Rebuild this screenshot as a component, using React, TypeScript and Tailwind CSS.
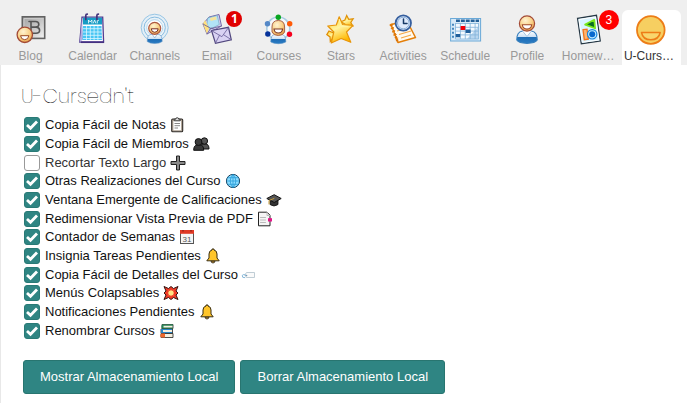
import { useState } from "react";
import type { ReactNode } from "react";

const line = { fill: "none", strokeLinecap: "round", strokeLinejoin: "round" } as const;

function Gradients() {
  return (
    <svg className="absolute size-0" aria-hidden="true">
      <defs>
        <radialGradient id="face" cx="0.4" cy="0.3" r="0.75">
          <stop offset="0" stopColor="#fff3d0" />
          <stop offset="0.6" stopColor="#f8cf84" />
          <stop offset="1" stopColor="#e59a45" />
        </radialGradient>
        <linearGradient id="gold" x1="0" y1="0" x2="0.4" y2="1">
          <stop offset="0" stopColor="#ffd21c" />
          <stop offset="0.5" stopColor="#fff3a0" />
          <stop offset="1" stopColor="#ffb800" />
        </linearGradient>
        <linearGradient id="grayBox" x1="0" y1="0" x2="1" y2="1">
          <stop offset="0" stopColor="#a2a2a2" />
          <stop offset="0.5" stopColor="#c4c4c4" />
          <stop offset="1" stopColor="#f4f4f4" />
        </linearGradient>
        <linearGradient id="shirt" x1="0" y1="0" x2="0" y2="1">
          <stop offset="0" stopColor="#ffffff" />
          <stop offset="0.45" stopColor="#cfe2f5" />
          <stop offset="0.5" stopColor="#1f6db5" />
          <stop offset="1" stopColor="#2a7cc4" />
        </linearGradient>
      </defs>
    </svg>
  );
}

function NavSvg({ children }: { children: ReactNode }) {
  return (
    <svg viewBox="0 0 30 30" className="size-[30px] overflow-visible" aria-hidden="true">
      {children}
    </svg>
  );
}

function BlogIcon() {
  return (
    <NavSvg>
      <rect x="6.3" y="2.8" width="22.4" height="21.6" fill="url(#grayBox)" stroke="#626262" strokeWidth="1.6" />
      <path d="M8 23V4.500H27" {...line} stroke="#c9c9c9" strokeWidth="1" />
      <path d="M13 7.500h6.500q3.300 0 3.300 2.700 0 2.600-2.600 2.900 3.400.3 3.400 3.200 0 3-3.600 3H14M15 7.500v11.800M15.500 13.100h4.500" {...line} stroke="#555" strokeWidth="1.600" />
      <circle cx="8.800" cy="20.800" r="7.700" fill="url(#face)" stroke="#a34a36" strokeWidth="1.300" />
      <path d="M4.500 21.700h8.400q-.6 4-4.200 4t-4.200-4z" fill="#fff" stroke="#9b4a22" strokeWidth="1" />
    </NavSvg>
  );
}

function CalendarIcon() {
  return (
    <NavSvg>
      <path d="M4 3.200H24.700L25.600 28H1.800z" fill="#fff" stroke="#4f3b91" strokeWidth="1.300" />
      <path d="M4 3.200 5.200 25.500 1.800 28z" fill="#b5aee0" />
      <path d="M5 3.700H24V10.500H5z" fill="#169cc4" />
      <path d="M5 12H23.500L24 26H4.500z" fill="#48c5f3" />
      <path d="M5 14.700h19M5 18h19M5 21.300h19M5 24.500h19M8.500 12v14M12.300 12v14M16.100 12v14M19.900 12v14" stroke="#dcf7ff" strokeWidth=".8" />
      <path d="M10.500 9V6l1.700 2 1.700-2v3M15.400 9l1.200-3 1.200 3M19.300 9V6.400h1.200" {...line} stroke="#fff" strokeWidth=".8" />
      <path d="M7.800 5.500V1.500q0-1.400 1.500-1.400M18.900 5.500V1.500q0-1.400 1.500-1.400" {...line} stroke="#42327c" strokeWidth="1.700" />
      <path d="M3 28.300h23" stroke="#443080" strokeWidth="1.500" />
    </NavSvg>
  );
}

function ChannelsIcon() {
  return (
    <NavSvg>
      <circle cx="14.700" cy="13.700" r="13.500" fill="#e4eff7" stroke="#98c6e5" strokeWidth="1" />
      <circle cx="14.700" cy="13.700" r="10.600" fill="#eaf3f8" stroke="#89bce0" strokeWidth="1" />
      <circle cx="14.700" cy="13.700" r="8" fill="#fff" stroke="#a5cde8" strokeWidth=".8" />
      <path d="M7.200 27.500q0-7 4-7h7q4 0 4 7-2.500 2-7.500 2t-7.500-2z" fill="url(#shirt)" stroke="#5f95c6" strokeWidth=".6" />
      <path d="m12 20 2.700 4 2.700-4" fill="#fff" stroke="#75a5ce" strokeWidth=".6" />
      <circle cx="14.700" cy="14.300" r="6" fill="url(#face)" stroke="#ad5842" strokeWidth="1.200" />
      <path d="M11.200 14.800h7q-.3 3.500-3.500 3.500t-3.500-3.500z" fill="#fff" stroke="#7d2e22" strokeWidth="1" />
    </NavSvg>
  );
}

function EmailIcon() {
  return (
    <NavSvg>
      <path d="m1 10 6-7 10-2.500 2.500 11.500-14.500 8z" fill="#d5cff0" stroke="#756aa9" strokeWidth="1" />
      <path d="m5 10 .8-6 9.500-2.500 2 9-9.800 5z" fill="#b2e3f7" stroke="#6aa6be" strokeWidth=".6" />
      <path d="m1 10 2-4 4 8-2 6z" fill="#ffe17d" />
      <path d="m8 4 6-1.500.7 3-6 1.500z" fill="#f7e49a" />
      <path d="m1 10 8 4.500 10.500-2.500M5 20l4-6 5 2" {...line} stroke="#6d639b" strokeWidth=".9" />
      <path d="m9.500 16.500 17-3.200 2.800 12.500-15.800 3.500z" fill="#d9d2f3" stroke="#51477e" strokeWidth="1.200" />
      <path d="m9.700 16.700 10.200 6 6.500-9M13.500 29l4-7.800M29 25.500l-7-4.500" {...line} stroke="#72679f" strokeWidth=".9" />
    </NavSvg>
  );
}

function CoursesIcon() {
  return (
    <NavSvg>
      <circle cx="14.300" cy="14.500" r="11.500" fill="#f6f9fb" stroke="#aacce2" strokeWidth="1.600" />
      <path d="M6.800 28q0-7.500 4.200-7.500h6.600q4.200 0 4.200 7.500-3 1.700-7.500 1.700t-7.500-1.700z" fill="url(#shirt)" stroke="#4f8dc4" strokeWidth=".6" />
      <path d="M8 13q0-6.500 6.300-6.500t6.300 6.500v5q-1.500 3.500-6.300 3.500t-6.300-3.500z" fill="url(#face)" stroke="#a86449" strokeWidth="1" />
      <path d="M10 15h8.600q-.5 4-4.300 4t-4.300-4z" fill="#fff" stroke="#7d3827" strokeWidth="1.100" />
      <circle cx="14.300" cy="3.300" r="2.700" fill="#08a51f" />
      <circle cx="3.500" cy="9.700" r="2.700" fill="#5588c7" />
      <circle cx="25.700" cy="9.700" r="2.700" fill="#ff5a08" />
      <circle cx="3.800" cy="20" r="2.700" fill="#06329a" />
      <circle cx="25.500" cy="20.300" r="2.700" fill="#f5001d" />
    </NavSvg>
  );
}

function StarsIcon() {
  return (
    <NavSvg>
      <path d="m20.700 1.500 2 3.800 4.500-.5-2.400 3.700 2 3.500-4.400-.5-3.200 3-.3-4.500-4-2.200 4-1.800z" fill="url(#gold)" stroke="#e09208" strokeWidth="1.200" />
      <path d="m3 17 3.700 1.500 4-2-1.200 4.500 2 3.500-4.200-.3-3 3.300-.3-4.600-3.200-2.300z" fill="url(#gold)" stroke="#e08c04" strokeWidth="1.200" />
      <path d="m13.200 2.800 3.500 7.700 10.300.8-6.500 6.700 4.300 10.300-9.700-3.800-9.800 4.500 2.500-11-6-6 8.500-1z" fill="url(#gold)" stroke="#e8950a" strokeWidth="1.200" strokeLinejoin="round" />
      <path d="m13.200 5.500 1.900 6.900 7 .4" {...line} stroke="#fff5a8" strokeWidth="1" />
    </NavSvg>
  );
}

function ActivitiesIcon() {
  return (
    <NavSvg>
      <path d="m3 10.500 16-3.500 8.500 16.500-17.500 5z" fill="#fffaf0" stroke="#e47e08" strokeWidth="1.500" strokeLinejoin="round" />
      <path d="m9 17 11-3M11 20.500l12-3.500M13 24l10-3" stroke="#f5a747" strokeWidth="1.200" />
      <path d="m3 10.500 7 18" stroke="#d9720a" strokeWidth="2.500" strokeDasharray="1.700 1.500" />
      <path d="m1.500 11 3-1m-1.700 4.500 3-1m-1.700 4.500 3-1m-1.500 4.500 3-1m-1.400 4.500 3-1" stroke="#e47e08" strokeWidth="1" />
      <circle cx="15.300" cy="9" r="7.700" fill="#e1edf9" stroke="#355e9e" strokeWidth="1.800" />
      <circle cx="15.300" cy="9" r="5.800" fill="#dfeafb" stroke="#8aaed9" strokeWidth="1" />
      <path d="M15.500 5v4.500h3.500" {...line} stroke="#173966" strokeWidth="1.500" />
    </NavSvg>
  );
}

function ScheduleIcon() {
  return (
    <NavSvg>
      <rect x=".6" y="4.500" width="30" height="22.500" fill="#d8eaf8" stroke="#6aa9d8" strokeWidth="1" />
      <rect x="5.500" y="9.500" width="22.500" height="15.500" fill="#f4faff" />
      <path d="m17 25 11-12v12z" fill="#b9d6ef" />
      <path d="M5.500 9.500h23M5.500 13.300h23M5.500 17.100h23M5.500 20.900h23M5.500 25h23M5.500 9v16M10.400 9v16M15.300 9v16M20.200 9v16M25.100 9v16M28.500 9v16" stroke="#81b2d9" strokeWidth=".8" />
      <path d="M6 6.800h23" stroke="#225f98" strokeWidth="2.500" strokeDasharray="3.900 1" />
      <path d="M3 9.800v15" stroke="#4687bd" strokeWidth="2" strokeDasharray="2 2" />
      <path d="M10.600 12h4.700v4h-4.700z" fill="#f20008" />
      <path d="M15.600 15.500h5v3.500h-5zM5.700 20h4.500v3.300H5.700z" fill="#205f9b" />
    </NavSvg>
  );
}

function ProfileIcon() {
  return (
    <NavSvg>
      <path d="M4.800 26q-.3-8 5.800-9h8.800q6 1 5.800 9-2 3.300-10.200 3.300T4.800 26z" fill="url(#shirt)" stroke="#387fbd" strokeWidth="1.200" />
      <path d="m10.500 17 4.500 5.500 4.500-5.500" fill="#fff" stroke="#91b9dd" strokeWidth=".8" />
      <circle cx="15" cy="9.500" r="7.600" fill="url(#face)" stroke="#a34a36" strokeWidth="1.200" />
      <path d="M10.300 10.800h9.400q-.5 4.300-4.700 4.300t-4.700-4.300z" fill="#fff" stroke="#a34b29" strokeWidth="1.100" />
    </NavSvg>
  );
}

function HomeworkIcon() {
  return (
    <NavSvg>
      <path d="m3.500 4.300 19-3L26.300 27l-19 2.700z" fill="#d9f3ff" stroke="#263744" strokeWidth="1.200" />
      <path d="m5 5.500 16.500-2.600L24.800 26l-16.500 2.400z" fill="none" stroke="#fff" strokeWidth="1" />
      <path d="m20.300 5.800.8 8.500-10-3.700z" fill="#086f21" stroke="#79e719" strokeWidth="1.700" strokeLinejoin="round" />
      <path d="m9 15.700 4-.5 1.300 10-4 .5z" fill="#ffb36d" stroke="#ef741c" strokeWidth="1.300" />
      <circle cx="18.200" cy="20.300" r="4.700" fill="#c4edff" stroke="#1685df" strokeWidth="1.200" />
      <circle cx="18.200" cy="20.300" r="3" fill="#0869ce" />
    </NavSvg>
  );
}

function SmileIcon() {
  return (
    <NavSvg>
      <circle cx="14.800" cy="16" r="13.800" fill="#f6cf61" stroke="#ed7d17" strokeWidth="1.800" />
      <path d="M5.500 18.500h18.700q-1.500 7.300-9.400 7.300t-9.300-7.300z" fill="#f8d66d" stroke="#ed7d17" strokeWidth="1.500" strokeLinejoin="round" />
    </NavSvg>
  );
}

function Emoji({ children }: { children: ReactNode }) {
  return (
    <svg viewBox="0 0 16 16" className="h-4 w-4 shrink-0 overflow-visible" aria-hidden="true">
      {children}
    </svg>
  );
}

const clipboard = (
  <Emoji>
    <rect x="1.700" y="2" width="11" height="12.800" rx="1" fill="#b5a99b" stroke="#302c28" strokeWidth="1.100" />
    <path d="M3.400 4H11v9.200H3.400z" fill="#fff" />
    <path d="M4.500 6.500h5.500M4.500 8.700h5.500M4.500 11h3.500" stroke="#888" strokeWidth="1" />
    <path d="M4.200 3.800V2.200h1.500Q5.700.7 7.200.7t1.500 1.500h1.500v1.600z" fill="#ddd" stroke="#333" strokeWidth=".9" />
  </Emoji>
);
const people = (
  <Emoji>
    <path d="M7 13q0-5 3.500-5h2q3.500 0 3.500 5z" fill="#555" stroke="#111" />
    <circle cx="11.400" cy="5" r="3.200" fill="#555" stroke="#111" />
    <path d="M.7 14.300q0-5.300 3.500-5.300h3q3.500 0 3.500 5.300z" fill="#383838" stroke="#111" />
    <circle cx="5.500" cy="6" r="3.400" fill="#3c3c3c" stroke="#111" />
  </Emoji>
);
const plus = (
  <Emoji>
    <path d="M6.500 1h3v5.500H15v3H9.500V15h-3V9.500H1v-3h5.500z" fill="#8a8a8a" stroke="#222" strokeWidth="1" />
  </Emoji>
);
const globe = (
  <Emoji>
    <circle cx="8" cy="8" r="6.600" fill="#8adcff" stroke="#143c59" strokeWidth="1" />
    <path d="M1.500 8h13M2.700 4.700h10.600M2.700 11.300h10.600M8 1.500v13M8 1.500q-6 6.500 0 13M8 1.500q6 6.500 0 13" {...line} stroke="#1e95d2" strokeWidth=".7" />
  </Emoji>
);
const cap = (
  <Emoji>
    <path d="M4 7.500v5q4 3 8 0v-5z" fill="#333" stroke="#111" strokeWidth=".8" />
    <path d="m.8 6.500 7.400-3.800 7 3.800-7 4z" fill="#555" stroke="#111" />
    <path d="m8 6.500-5 2V12" {...line} stroke="#c69b39" strokeWidth="1" />
  </Emoji>
);
const pageTab = (
  <Emoji>
    <path d="M1.500 1.200h8.500l3 3v10.600H1.500z" fill="#f5f5f5" stroke="#222" />
    <path d="M10 1.500v3h3M3.500 6.500h5M3.500 9h5M3.500 11.500h5" {...line} stroke="#bbb" strokeWidth="1" />
    <path d="M11 7.200h4v3.300h-4z" fill="#e31588" />
  </Emoji>
);
const dateCard = (
  <Emoji>
    <rect x="1.500" y="1.500" width="13" height="13" fill="#f5f5f5" stroke="#555" />
    <path d="M1 1h14v3.800H1z" fill="#df3925" />
    <path d="M4 1v1.500M12 1v1.500" stroke="#721b13" />
    <text x="8" y="12.500" textAnchor="middle" fontSize="8" fontFamily="Liberation Sans, sans-serif" fill="#555">31</text>
  </Emoji>
);
const bell = (
  <Emoji>
    <path d="M6 13h4q-.2 2-2 2t-2-2z" fill="#e69b12" stroke="#333" strokeWidth=".9" />
    <path d="M1.800 12.800 4 10V6q0-3.300 3-4V1h2v1q3 .7 3 4v4l2.200 2.800z" fill="#ffc52a" stroke="#382d13" strokeWidth="1" strokeLinejoin="round" />
  </Emoji>
);
const label = (
  <Emoji>
    <path d="M4.500 5.500h8v5h-8L2.800 8z" fill="#fafafa" stroke="#b9c7d0" strokeWidth=".9" />
    <circle cx="4.500" cy="8.500" r=".8" fill="#789" />
    <path d="M4.300 8.500q-3.500-2-4 .2t2.500 2" {...line} stroke="#75aed4" strokeWidth=".9" />
  </Emoji>
);
const burst = (
  <Emoji>
    <path d="m1 1.500 4.500 2L8 1.500l2.500 2 4.500-2-2 4.500 2 2-2 2 2 4.500-4.500-2-2.500 2-2.500-2-4.500 2L3 10 1 8l2-2z" fill="#ef3b26" stroke="#341512" strokeWidth="1" />
    <path d="m5.500 5.500 1.500.4L8 4.800l1 1.100 1.500-.4-.4 1.500L11.200 8l-1.100 1 .4 1.500-1.500-.4-1 1.100-1-1.100-1.500.4.400-1.500L4.800 8l1.100-1z" fill="#ffe485" />
  </Emoji>
);
const books = (
  <Emoji>
    <path d="M3 1.500h11v4H3zM2 6h11.500v4H2zM2 10.500h12v4H2z" fill="#f4efdf" stroke="#222" strokeWidth=".8" />
    <path d="M3 1.500h11v1.200H4.500v1.800H14v1H3q-1-2 0-4z" fill="#248655" />
    <path d="M2 6h11v1H4v2h9v1H2z" fill="#2785c7" />
    <path d="M2 10.500h4v4H2q-1.500-2 0-4z" fill="#ee682c" />
  </Emoji>
);

type NavItem = { name: string; icon: ReactNode; badge?: ReactNode; active?: boolean };

const navItems: NavItem[] = [
  { name: "Blog", icon: <BlogIcon /> },
  { name: "Calendar", icon: <CalendarIcon /> },
  { name: "Channels", icon: <ChannelsIcon /> },
  {
    name: "Email",
    icon: <EmailIcon />,
    badge: <span className="absolute top-px right-1 flex size-4 items-center justify-center rounded-full bg-[#e00000] font-['Open_Sans',sans-serif] text-xs font-bold text-white">1</span>,
  },
  { name: "Courses", icon: <CoursesIcon /> },
  { name: "Stars", icon: <StarsIcon /> },
  { name: "Activities", icon: <ActivitiesIcon /> },
  { name: "Schedule", icon: <ScheduleIcon /> },
  { name: "Profile", icon: <ProfileIcon /> },
  {
    name: "Homework",
    icon: <HomeworkIcon />,
    badge: <span className="absolute top-0 right-0 flex size-5 items-center justify-center rounded-full bg-[#ff0000] text-xs text-white">3</span>,
  },
  { name: "U-Cursedn't", icon: <SmileIcon />, active: true },
];

const options = [
  { id: "notas", text: "Copia Fácil de Notas", icon: clipboard, on: true },
  { id: "miembros", text: "Copia Fácil de Miembros", icon: people, on: true },
  { id: "recortar", text: "Recortar Texto Largo", icon: plus, on: false },
  { id: "realizaciones", text: "Otras Realizaciones del Curso", icon: globe, on: true },
  { id: "ventana", text: "Ventana Emergente de Calificaciones", icon: cap, on: true },
  { id: "pdf", text: "Redimensionar Vista Previa de PDF", icon: pageTab, on: true },
  { id: "semanas", text: "Contador de Semanas", icon: dateCard, on: true },
  { id: "insignia", text: "Insignia Tareas Pendientes", icon: bell, on: true },
  { id: "detalles", text: "Copia Fácil de Detalles del Curso", icon: label, on: true },
  { id: "menus", text: "Menús Colapsables", icon: burst, on: true },
  { id: "notificaciones", text: "Notificaciones Pendientes", icon: bell, on: true },
  { id: "renombrar", text: "Renombrar Cursos", icon: books, on: true },
];

function Option({ id, text, icon, on }: (typeof options)[number]) {
  const [checked, setChecked] = useState(on);
  return (
    <li className="flex items-center">
      <span className="relative mr-[5px] size-4 shrink-0">
        <input
          id={id}
          type="checkbox"
          checked={checked}
          onChange={(e) => setChecked(e.target.checked)}
          className="block size-4 appearance-none rounded-[3px] border border-[#999] bg-white checked:border-[#297a76] checked:bg-[#2f8583]"
        />
        {checked && (
          <svg viewBox="0 0 16 16" className="pointer-events-none absolute inset-0 size-4" aria-hidden="true">
            <path d="m3 8 3.500 3.200L13 4.500" fill="none" stroke="#fff" strokeWidth="2.800" />
          </svg>
        )}
      </span>
      <label htmlFor={id} className={checked ? "flex items-center gap-1 text-[#111]" : "flex items-center gap-1 text-[#333]"}>
        {text}
        {icon}
      </label>
    </li>
  );
}

const buttonClass = "h-[34px] rounded-[3px] border border-[#287570] bg-[#2f8583] px-4 text-[13px] text-white";

export default function App() {
  return (
    <div className="min-h-screen bg-white font-['Liberation_Sans',Arial,sans-serif] text-[13px] leading-4">
      <Gradients />
      <nav className="bg-[#efefef] pt-2.5 pr-1.5 pl-px">
        <ul className="flex gap-[3px]">
          {navItems.map((item) => (
            <li key={item.name} className="min-w-0 flex-1">
              <a
                href="#"
                className={
                  item.active
                    ? "relative flex h-[55px] flex-col items-center rounded-t-md bg-white px-0.5 pt-1 text-[#333]"
                    : "relative flex h-[55px] flex-col items-center px-0.5 pt-1 text-[#999]"
                }
              >
                {item.icon}
                <span className="mt-1 max-w-full truncate text-xs leading-4">{item.name}</span>
                {item.badge}
              </a>
            </li>
          ))}
        </ul>
      </nav>
      <main className="min-h-[calc(100vh-65px)] border-l border-[#e8e8e8] pt-[17px] pl-5">
        <h1 className="font-['Poppins','Inter',sans-serif] text-xl leading-7 font-extralight text-black">U-Cursedn't</h1>
        <ul className="mt-1.5 ml-[3px] grid h-56 auto-rows-fr">
          {options.map((option) => (
            <Option key={option.id} {...option} />
          ))}
        </ul>
        <div className="mt-5 ml-0.5 flex flex-wrap gap-[5px]">
          <button type="button" className={buttonClass}>Mostrar Almacenamiento Local</button>
          <button type="button" className={buttonClass}>Borrar Almacenamiento Local</button>
        </div>
      </main>
    </div>
  );
}
